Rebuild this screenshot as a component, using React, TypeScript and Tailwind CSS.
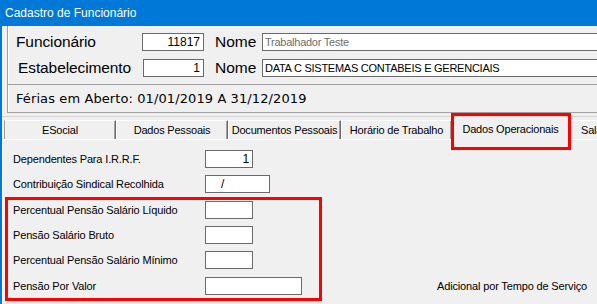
import React from "react";

const inputCls =
  "h-[18px] bg-white border border-[#6a6a6a] shrink-0 flex items-center overflow-hidden whitespace-nowrap";

function Tab({ w, label, first }: { w: number; label: string; first?: boolean }) {
  return (
    <div
      className={`h-[19px] shrink-0 flex items-center justify-center border-t border-white border-r border-r-[#6a6a6a] shadow-[inset_-1px_0_0_#a0a0a0] ${first ? "border-l border-l-[#a0a0a0]" : "border-l border-l-white"}`}
      style={{ width: w }}
    >
      {label}
    </div>
  );
}

function Row({ label, w, value, align, mt, extra }: { label: string; w: number; value?: string; align?: string; mt: string; extra?: React.ReactNode }) {
  return (
    <div className={`flex items-center h-[18px] ${mt}`}>
      <span className="w-[192px] shrink-0">{label}</span>
      <div className={`${inputCls} ${align ?? ""}`} style={{ width: w }}>
        {value}
      </div>
      {extra}
    </div>
  );
}

export default function App() {
  return (
    <div className="w-[597px] h-[304px] bg-[#f0f0f0] overflow-hidden relative font-['Liberation_Sans',Arial,sans-serif] text-black">
      <div className="h-[26px] bg-[#0078d7] text-white text-[12px] pl-[5px] flex items-center">
        Cadastro de Funcionário
      </div>
      <div className="flex h-[278px]">
        <div className="w-[2px] shrink-0 bg-[#0078d7]" />
        <div className="flex-1 flex flex-col min-w-0">
          {/* header panel */}
          <div className="ml-[5px] h-[59px] border-l border-b border-[#a0a0a0] shadow-[inset_1px_0_0_#ffffff] pt-[7px] pl-[8px] flex flex-col gap-[8px]">
            <div className="flex items-center h-[18px]">
              <span className="w-[126px] shrink-0 text-[15.5px] tracking-[-0.1px]">Funcionário</span>
              <div className={`${inputCls} w-[62px] justify-end pr-[3px] text-[12px]`}>11817</div>
              <span className="ml-[11px] w-[47px] shrink-0 text-[15.5px]">Nome</span>
              <div className={`${inputCls} w-[360px] pl-[2px] text-[11px] tracking-[-0.25px] text-[#6d6d6d]`}>
                Trabalhador Teste
              </div>
            </div>
            <div className="flex items-center h-[18px]">
              <span className="w-[127px] shrink-0 pl-[2px] text-[15.5px] tracking-[-0.1px]">Estabelecimento</span>
              <div className={`${inputCls} w-[61px] justify-end pr-[3px] text-[12px]`}>1</div>
              <span className="ml-[11px] w-[47px] shrink-0 text-[15.5px]">Nome</span>
              <div className={`${inputCls} w-[360px] pl-[2px] text-[11px] tracking-[-0.25px]`}>
                DATA C SISTEMAS CONTABEIS E GERENCIAIS
              </div>
            </div>
          </div>
          {/* ferias panel */}
          <div className="ml-[5px] h-[28px] border-l border-b border-[#a0a0a0] shadow-[inset_1px_0_0_#ffffff] pl-[8px] flex items-center font-['DejaVu_Sans',sans-serif] text-[13px] tracking-[0.1px]">
            Férias em Aberto: 01/01/2019 A 31/12/2019
          </div>
          <div className="h-[3px]" />
          <div className="h-px bg-[#d4d4d4]" />
          {/* tabs */}
          <div className="h-[22px] flex items-end pl-[2px] text-[11px] tracking-[-0.2px] whitespace-nowrap relative z-10">
            <Tab w={112} label="ESocial" first />
            <Tab w={112} label="Dados Pessoais" />
            <Tab w={113} label="Documentos Pessoais" />
            <Tab w={111} label="Horário de Trabalho" />
            <div className="w-[117px] h-[24px] -mb-[2px] shrink-0 flex items-start justify-center pt-[4px] bg-[#f0f0f0]">
              Dados Operacionais
            </div>
            <div className="h-[19px] w-[100px] shrink-0 flex items-center pl-[11px] border-t border-white border-l border-l-white">
              Salário
            </div>
          </div>
          {/* page */}
          <div className="flex-1 border-t border-l border-white pt-[10px] pl-[10px] text-[11px] tracking-[-0.15px] whitespace-nowrap">
            <Row mt="" label="Dependentes Para I.R.R.F." w={48} value="1" align="justify-end pr-[3px] text-[12px]" />
            <Row mt="mt-[7px]" label="Contribuição Sindical Recolhida" w={65} value="/" align="pl-[15px] text-[12px]" />
            <Row mt="mt-[8px]" label="Percentual Pensão Salário Líquido" w={48} />
            <Row mt="mt-[7px]" label="Pensão Salário Bruto" w={48} />
            <Row mt="mt-[7px]" label="Percentual Pensão Salário Mínimo" w={48} />
            <Row
              mt="mt-[8px]"
              label="Pensão Por Valor"
              w={97}
              extra={<span className="ml-[135px]">Adicional por Tempo de Serviço</span>}
            />
          </div>
        </div>
      </div>
      {/* annotation boxes */}
      <div className="absolute left-[451px] top-[113px] w-[120px] h-[37px] border-[3px] border-[#ff0000] z-20" />
      <div className="absolute left-[5px] top-[197px] w-[317px] h-[104px] border-[3px] border-[#ff0000] z-20" />
    </div>
  );
}
